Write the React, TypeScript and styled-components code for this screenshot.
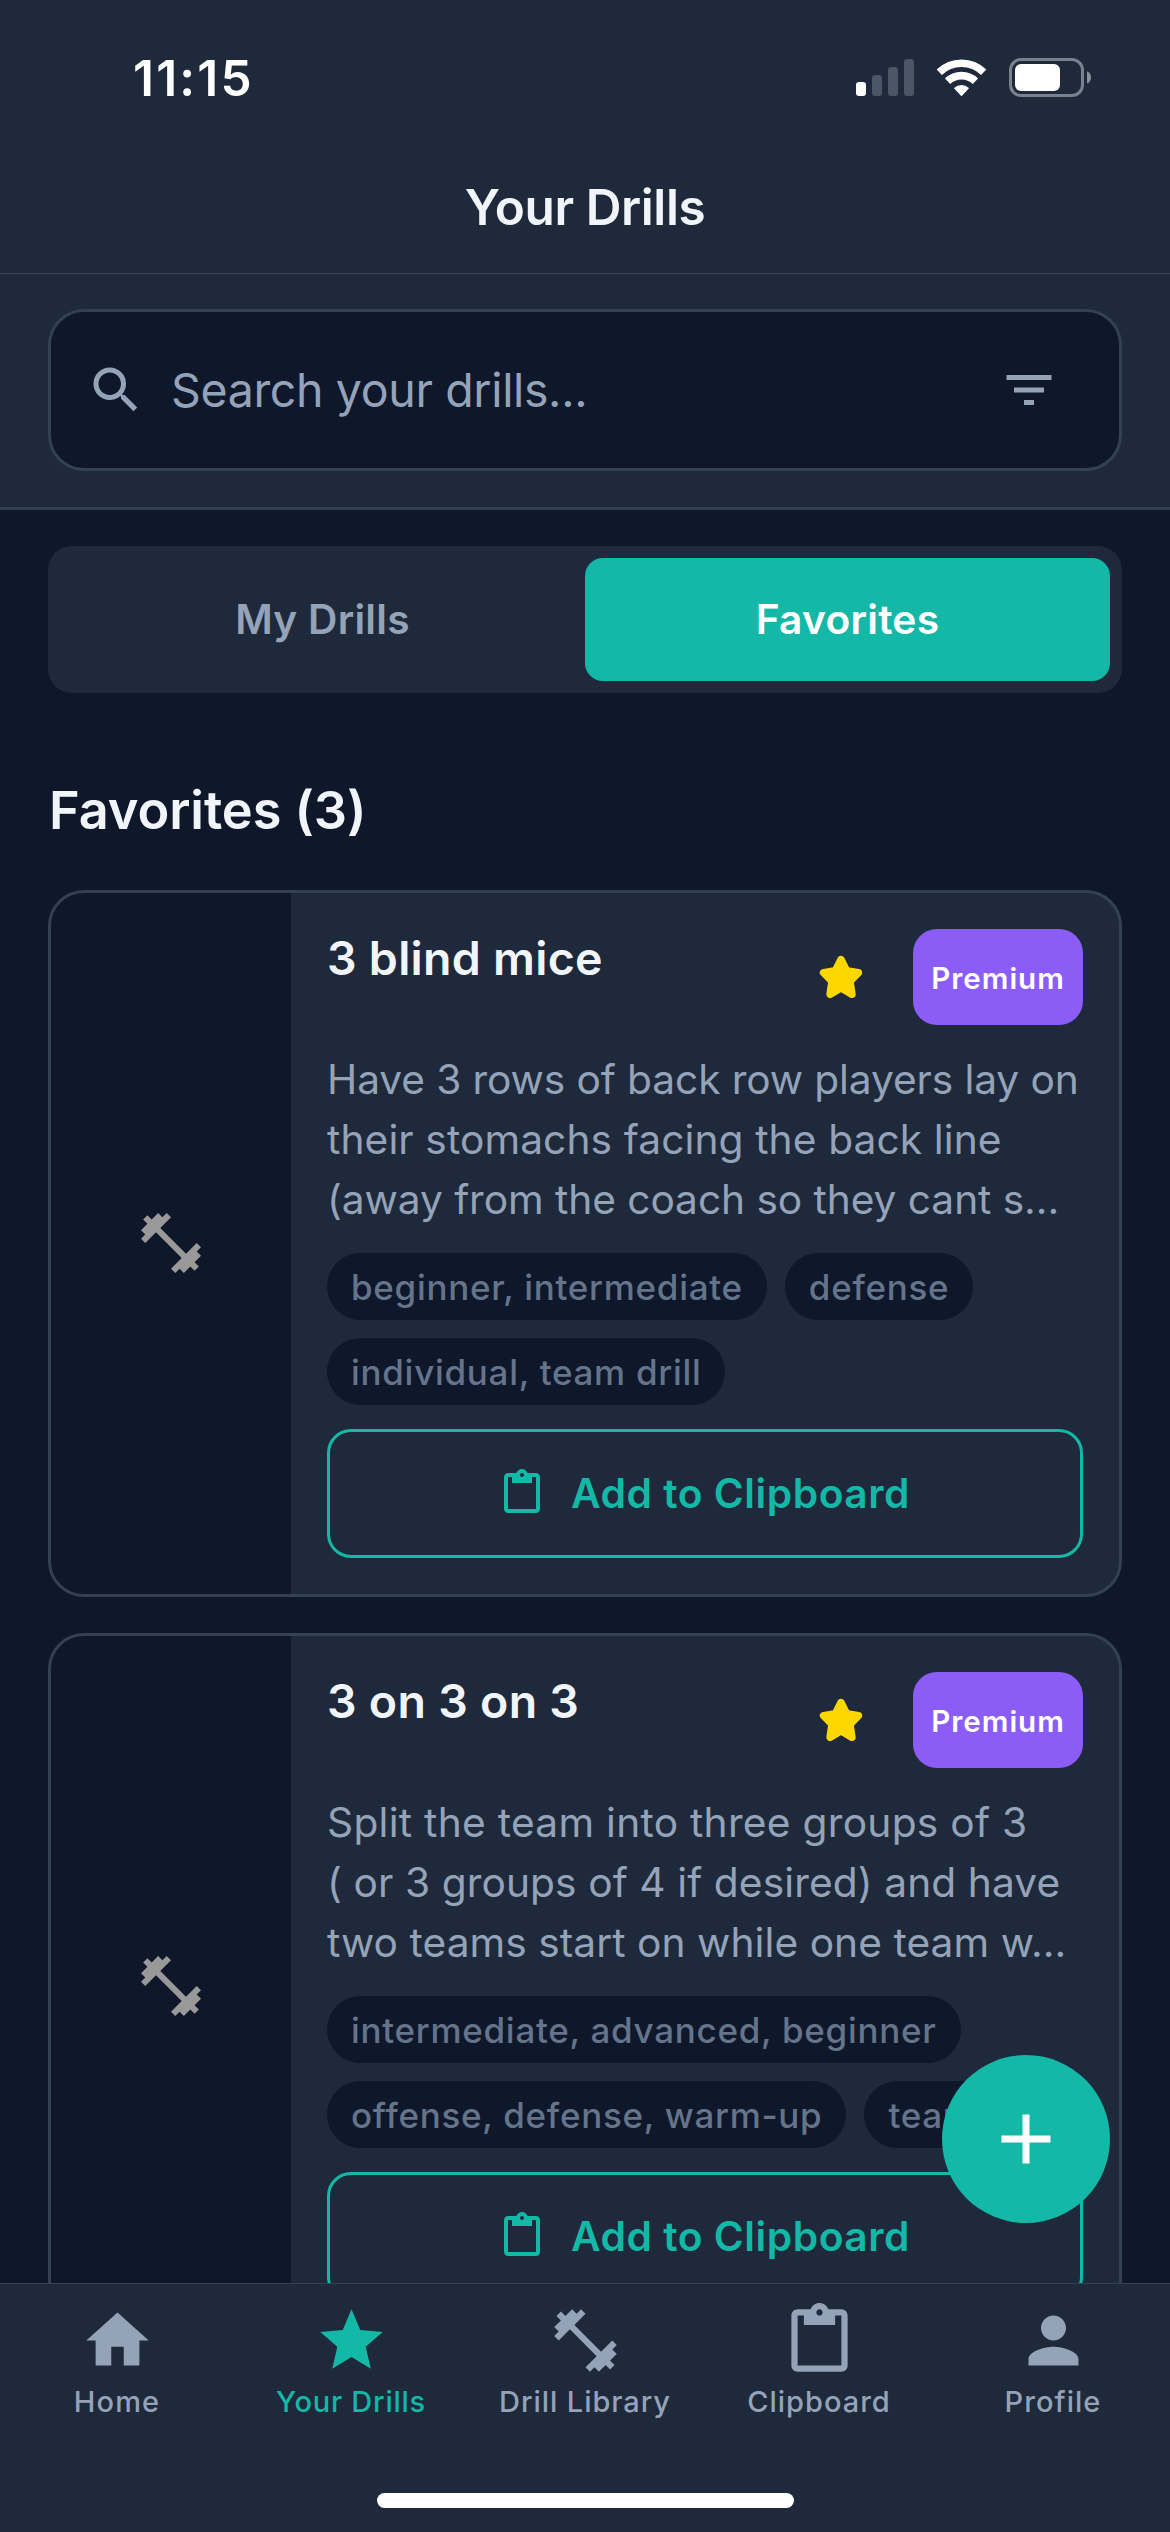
import React from 'react';
import styled, { createGlobalStyle } from 'styled-components';
import type { IconType } from 'react-icons';
import {
  MdAdd,
  MdContentPaste,
  MdFilterList,
  MdFitnessCenter,
  MdHome,
  MdPerson,
  MdSearch,
  MdStar,
} from 'react-icons/md';

const color = {
  background: '#0f172a',
  surface: '#1e293b',
  border: '#334155',
  primary: '#14b8a6',
  premium: '#8b5cf6',
  favorite: '#ffd700',
  text: '#f1f5f9',
  muted: '#94a3b8',
  faint: '#64748b',
  placeholder: '#999999',
  white: '#ffffff',
};

const GlobalStyle = createGlobalStyle`
  *, *::before, *::after { box-sizing: border-box; }
  body {
    margin: 0;
    background: ${color.background};
    font-family: Inter, "Liberation Sans", sans-serif;
  }
  svg { display: block; flex: none; }
  button { font-family: inherit; border: 0; padding: 0; margin: 0; background: none; }
`;

const Screen = styled.div`
  display: flex;
  flex-direction: column;
  width: 1170px;
  height: 2532px;
  overflow: hidden;
  background: ${color.background};
`;

const TopBar = styled.header`
  flex: none;
  height: 274px;
  background: ${color.surface};
  border-bottom: 1px solid #3b485b;
`;

const StatusBar = styled.div`
  display: flex;
  align-items: center;
  justify-content: space-between;
  height: 141px;
  padding: 15px 78px 0 133px;
`;

const Clock = styled.span`
  font-size: 49.5px;
  line-height: 60px;
  font-weight: 600;
  letter-spacing: 2.2px;
  color: ${color.white};
`;

const ScreenTitle = styled.h1`
  margin: 0;
  text-align: center;
  font-size: 49.5px;
  line-height: 132px;
  font-weight: 600;
  letter-spacing: -0.4px;
  color: ${color.text};
`;

const SearchSection = styled.section`
  flex: none;
  height: 236px;
  padding: 35px 48px 36px;
  background: ${color.surface};
  border-bottom: 3px solid ${color.border};
`;

const SearchBox = styled.div`
  display: flex;
  align-items: center;
  gap: 25px;
  height: 162px;
  padding: 0 60px 0 35px;
  background: ${color.background};
  border: 3px solid ${color.border};
  border-radius: 36px;
  color: ${color.muted};
`;

const Placeholder = styled.span`
  flex: 1;
  font-size: 46.5px;
  line-height: 60px;
  letter-spacing: -0.36px;
`;

const Content = styled.main`
  position: relative;
  flex: 1;
  min-height: 0;
  overflow: hidden;
  padding: 36px 48px 0;
`;

const Segments = styled.div`
  display: flex;
  height: 147px;
  padding: 12px;
  background: ${color.surface};
  border-radius: 24px;
`;

const Segment = styled.button<{ $active?: boolean }>`
  flex: 1;
  border-radius: 18px;
  font-size: 40.7px;
  font-weight: 600;
  letter-spacing: 0.25px;
  color: ${(p) => (p.$active ? color.white : color.muted)};
  background: ${(p) => (p.$active ? color.primary : 'transparent')};
`;

const SectionTitle = styled.h2`
  margin: 81px 0 44px;
  padding-left: 1px;
  font-size: 52.3px;
  line-height: 72px;
  font-weight: 600;
  letter-spacing: -0.08px;
  color: ${color.text};
`;

const CardList = styled.div`
  display: flex;
  flex-direction: column;
  gap: 36px;
`;

const Card = styled.article`
  display: flex;
  height: 707px;
  overflow: hidden;
  background: ${color.surface};
  border: 3px solid ${color.border};
  border-radius: 36px;
`;

const Thumbnail = styled.div`
  display: flex;
  flex: none;
  align-items: center;
  justify-content: center;
  width: 240px;
  padding-bottom: 1px;
  background: ${color.background};
  color: ${color.placeholder};
`;

const CardBody = styled.div`
  display: flex;
  flex: 1;
  flex-direction: column;
  min-width: 0;
  padding: 36px;
`;

const CardHeader = styled.div`
  display: flex;
  align-items: flex-start;
  height: 96px;
  margin-bottom: 24px;
`;

const CardTitle = styled.h3`
  flex: 1;
  margin: 0;
  font-size: 46.5px;
  line-height: 58px;
  font-weight: 600;
  letter-spacing: 0.28px;
  color: ${color.text};
`;

const FavoriteButton = styled.button`
  display: flex;
  align-items: center;
  justify-content: center;
  width: 96px;
  height: 96px;
  margin-right: 24px;
`;

const PremiumBadge = styled.span`
  width: 170px;
  padding-top: 2px;
  border-radius: 24px;
  background: ${color.premium};
  text-align: center;
  font-size: 29.6px;
  line-height: 94px;
  font-weight: 600;
  letter-spacing: 0.95px;
  color: ${color.white};
`;

const Description = styled.p`
  margin: 0 0 23px;
  padding-top: 1px;
  font-size: 40.7px;
  line-height: 60px;
  color: ${color.muted};
`;

const Line = styled.span<{ $tracking: number }>`
  display: block;
  white-space: nowrap;
  letter-spacing: ${(p) => p.$tracking}px;
`;

const Tags = styled.div`
  display: flex;
  flex-wrap: wrap;
  gap: 18px;
  margin-bottom: 24px;
`;

const Tag = styled.span`
  padding: 2px 24px 0;
  border-radius: 34px;
  background: ${color.background};
  font-size: 35px;
  line-height: 65px;
  font-weight: 500;
  letter-spacing: 0.7px;
  color: ${color.faint};
`;

const ClipboardButton = styled.button`
  display: flex;
  flex: none;
  align-items: center;
  justify-content: center;
  gap: 25px;
  height: 129px;
  padding-right: 2px;
  border: 3px solid ${color.primary};
  border-radius: 24px;
  font-size: 40.7px;
  font-weight: 600;
  letter-spacing: 0.55px;
  color: ${color.primary};

  svg { margin-bottom: 1px; }
`;

const AddButton = styled.button`
  position: absolute;
  right: 60px;
  bottom: 60px;
  display: flex;
  align-items: center;
  justify-content: center;
  width: 168px;
  height: 168px;
  border-radius: 50%;
  background: ${color.primary};
  color: ${color.white};
`;

const BottomBar = styled.footer`
  display: flex;
  flex: none;
  flex-direction: column;
  align-items: center;
  height: 249px;
  background: ${color.surface};
  border-top: 1px solid ${color.border};
`;

const Tabs = styled.nav`
  display: flex;
  width: 100%;
  height: 209px;
`;

const Tab = styled.button<{ $active?: boolean }>`
  display: flex;
  flex: 1 1 0;
  flex-direction: column;
  align-items: center;
  gap: 6px;
  padding-top: 19px;
  color: ${(p) => (p.$active ? color.primary : color.muted)};
`;

const TabLabel = styled.span<{ $tracking: number }>`
  font-size: 29px;
  line-height: 36px;
  font-weight: 500;
  white-space: nowrap;
  letter-spacing: ${(p) => p.$tracking}px;
`;

const HomeIndicator = styled.div`
  width: 417px;
  height: 15px;
  border-radius: 8px;
  background: ${color.white};
`;

const StatusIcons = () => (
  <svg width="236" height="40" viewBox="0 0 236 40" fill="none">
    <rect x="0" y="24" width="10" height="14" rx="3" fill="#fff" />
    <rect x="16" y="17" width="10" height="21" rx="3" fill="#4b5563" />
    <rect x="32" y="9" width="10" height="29" rx="3" fill="#4b5563" />
    <rect x="48" y="1" width="10" height="37" rx="3" fill="#4b5563" />
    <path d="M83.3 14.2A32 32 0 0 1 127.7 14.2" stroke="#fff" strokeWidth="7.6" />
    <path d="M91.6 23.2A20 20 0 0 1 119.4 23.2" stroke="#fff" strokeWidth="7.6" />
    <path
      d="M105.5 37.2L98.9 30.3A9.6 9.6 0 0 1 112.1 30.3Z"
      fill="#fff"
      stroke="#fff"
      strokeWidth="1.4"
      strokeLinejoin="round"
    />
    <rect x="154.5" y="1.5" width="72" height="36" rx="10.5" stroke="#7a818d" strokeWidth="3" />
    <rect x="159" y="6" width="45" height="27" rx="6" fill="#fff" />
    <path d="M231 13.2C233.5 14.2 235 16.6 235 19.4C235 22.2 233.5 24.6 231 25.5Z" fill="#8b919b" />
  </svg>
);

const RoundedStar = () => (
  <svg width="48" height="48" viewBox="15 16 144 144">
    <path
      d="M87 36L103.5 69.4L139 75L113.6 100.7L119.5 139.5L87 120L54.5 139.5L60.4 100.7L35 75L70.5 69.4Z"
      fill={color.favorite}
      stroke={color.favorite}
      strokeWidth="23"
      strokeLinejoin="round"
    />
  </svg>
);

interface Drill {
  title: string;
  lines: [string, number][];
  tags: string[];
}

const drills: Drill[] = [
  {
    title: '3 blind mice',
    lines: [
      ['Have 3 rows of back row players lay on', -0.11],
      ['their stomachs facing the back line', 0.1],
      ['(away from the coach so they cant s...', -0.07],
    ],
    tags: ['beginner, intermediate', 'defense', 'individual, team drill'],
  },
  {
    title: '3 on 3 on 3',
    lines: [
      ['Split the team into three groups of 3', 0.27],
      ['( or 3 groups of 4 if desired) and have', 0.09],
      ['two teams start on while one team w...', 0.05],
    ],
    tags: ['intermediate, advanced, beginner', 'offense, defense, warm-up', 'team drill'],
  },
];

const DrillCard = ({ title, lines, tags }: Drill) => (
  <Card>
    <Thumbnail>
      <MdFitnessCenter size={72} />
    </Thumbnail>
    <CardBody>
      <CardHeader>
        <CardTitle>{title}</CardTitle>
        <FavoriteButton aria-label="Remove from favorites">
          <RoundedStar />
        </FavoriteButton>
        <PremiumBadge>Premium</PremiumBadge>
      </CardHeader>
      <Description>
        {lines.map(([text, tracking]) => (
          <Line key={text} $tracking={tracking}>
            {text}
          </Line>
        ))}
      </Description>
      <Tags>
        {tags.map((tag) => (
          <Tag key={tag}>{tag}</Tag>
        ))}
      </Tags>
      <ClipboardButton>
        <MdContentPaste size={48} />
        Add to Clipboard
      </ClipboardButton>
    </CardBody>
  </Card>
);

const tabs: { label: string; icon: IconType; tracking: number; active?: boolean }[] = [
  { label: 'Home', icon: MdHome, tracking: 1.2 },
  { label: 'Your Drills', icon: MdStar, tracking: 0.76, active: true },
  { label: 'Drill Library', icon: MdFitnessCenter, tracking: 0.94 },
  { label: 'Clipboard', icon: MdContentPaste, tracking: 1 },
  { label: 'Profile', icon: MdPerson, tracking: 1.05 },
];

export default function App() {
  return (
    <>
      <GlobalStyle />
      <Screen>
        <TopBar>
          <StatusBar>
            <Clock>11:15</Clock>
            <StatusIcons />
          </StatusBar>
          <ScreenTitle>Your Drills</ScreenTitle>
        </TopBar>
        <SearchSection>
          <SearchBox>
            <MdSearch size={60} />
            <Placeholder>Search your drills...</Placeholder>
            <MdFilterList size={60} />
          </SearchBox>
        </SearchSection>
        <Content>
          <Segments>
            <Segment>My Drills</Segment>
            <Segment $active>Favorites</Segment>
          </Segments>
          <SectionTitle>Favorites (3)</SectionTitle>
          <CardList>
            {drills.map((drill) => (
              <DrillCard key={drill.title} {...drill} />
            ))}
          </CardList>
          <AddButton aria-label="Add drill">
            <MdAdd size={84} />
          </AddButton>
        </Content>
        <BottomBar>
          <Tabs>
            {tabs.map(({ label, icon: Icon, tracking, active }) => (
              <Tab key={label} $active={active}>
                <Icon size={75} />
                <TabLabel $tracking={tracking}>{label}</TabLabel>
              </Tab>
            ))}
          </Tabs>
          <HomeIndicator />
        </BottomBar>
      </Screen>
    </>
  );
}
